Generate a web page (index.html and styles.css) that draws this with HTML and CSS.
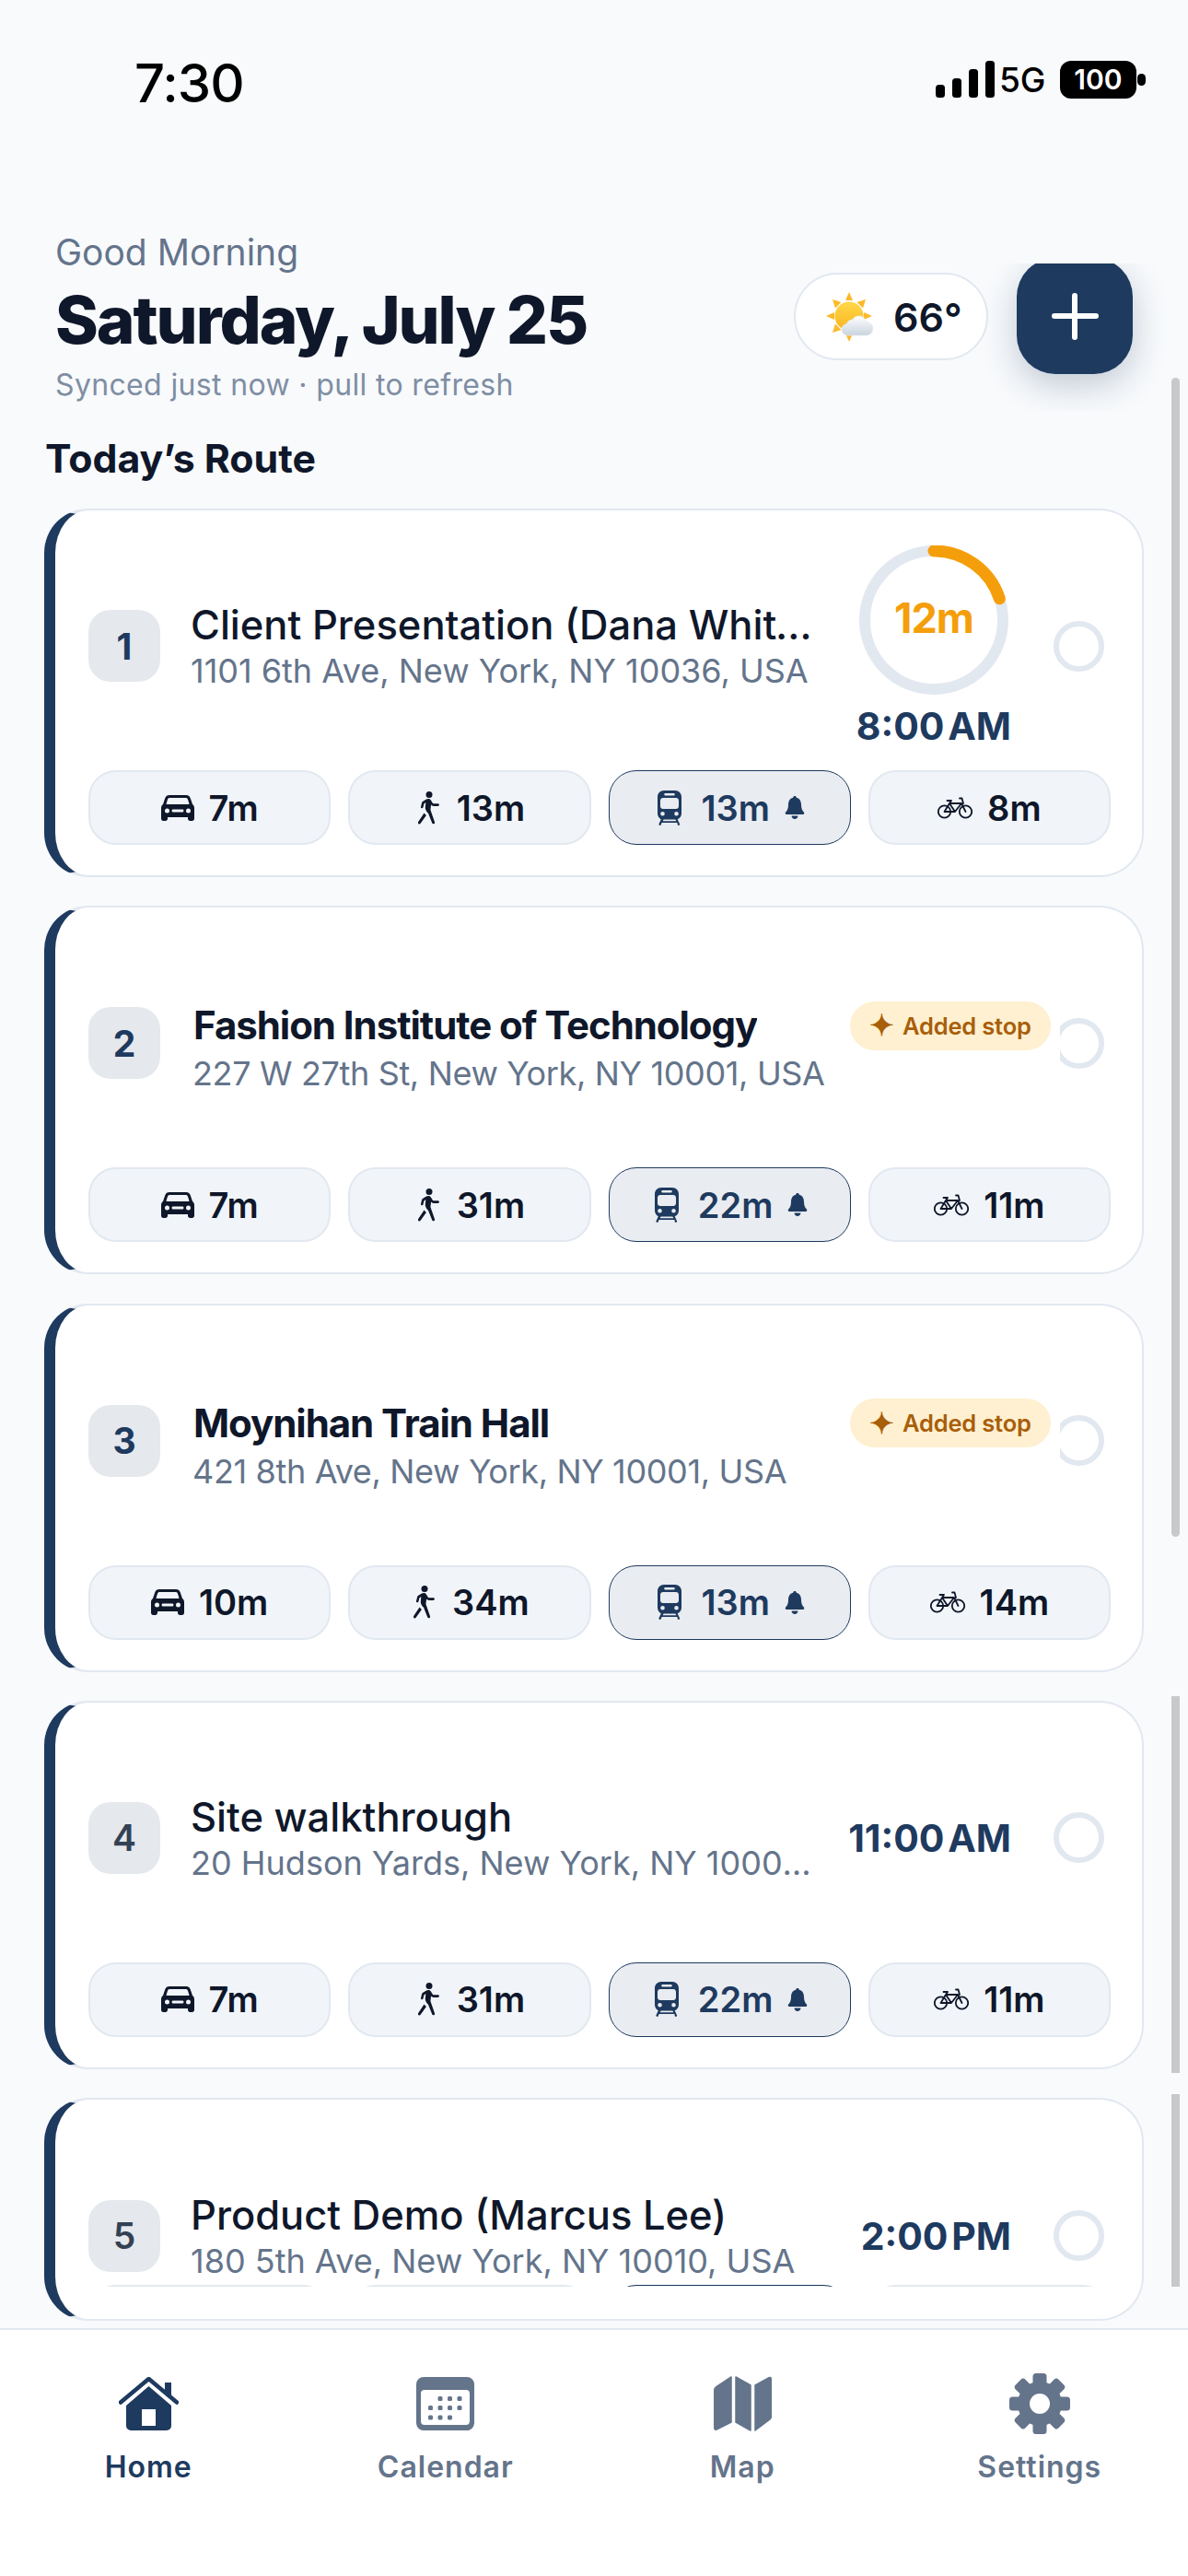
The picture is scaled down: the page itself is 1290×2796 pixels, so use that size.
FILE: index.html
```html
<!DOCTYPE html>
<html lang="en">
<head>
<meta charset="utf-8">
<title>Today's Route</title>
<link rel="stylesheet" href="styles.css">
</head>
<body>
<svg class="defs" width="0" height="0" aria-hidden="true">
  <symbol id="i-car" viewBox="0 0 36 28"><path fill-rule="evenodd" d="M9 0h18c2.400 0 4 1.200 4.800 3.400L34 10c1.300 1 2 2.400 2 4v11.500c0 1.400-1 2.500-2.400 2.500h-2.200c-1.400 0-2.400-1-2.400-2.500V24H7v1.500C7 27 6 28 4.600 28H2.400C1 28 0 26.900 0 25.500V14c0-1.600.7-3 2-4l2.200-6.600C5 1.200 6.600 0 9 0zm.4 3C8.200 3 7.400 3.600 7 4.800L5.600 9.200C5.400 9.700 5.700 10 6.200 10h23.600c.5 0 .8-.3.6-.8L29 4.800C28.600 3.600 27.800 3 26.600 3H9.400zM6.500 14.500a2.500 2.500 0 1 0 0 5 2.500 2.500 0 0 0 0-5zm23 0a2.500 2.500 0 1 0 0 5 2.500 2.500 0 0 0 0-5zM13 15.500c-.8 0-1.500.6-1.500 1.500s.7 1.500 1.500 1.500h10c.8 0 1.500-.6 1.500-1.500s-.7-1.500-1.500-1.500H13z"/></symbol>
  <symbol id="i-walk" viewBox="0 0 24 36"><circle cx="12" cy="3.500" r="3.500"/><path d="M9 8.500c1.500-.8 3.600-.8 4.700.7l2 3.200c.4.600.9.900 1.600.9h4.200c.8 0 1.400.6 1.400 1.300s-.6 1.300-1.400 1.300h-4.600c-1.200 0-2.100-.5-2.800-1.400l-.7 5.500 4.600 13.200c.3.900-.1 1.700-.9 2-.8.300-1.600-.1-1.900-.9l-4.200-10.500-1.500-1.600-1-1.800c-.6-1-.8-2-.7-3.100l.5-5.300-1.900 1.500-.9 3.800c-.2.800-.9 1.200-1.600 1-.7-.2-1.100-.9-.9-1.600l1.100-4.500c.1-.5.400-.9.800-1.200L9 8.500z"/><path d="M6.500 23.500l2.400 2.600-6.300 8.700c-.5.700-1.400.9-2.100.4-.7-.5-.8-1.400-.3-2.100l6.300-9.600z"/></symbol>
  <symbol id="i-train" viewBox="0 0 26 38"><path fill-rule="evenodd" d="M7 0h12c4 0 7 3 7 7v18c0 3-1.700 5.200-4.300 6.200l2.300 5c.3.700 0 1.300-.6 1.600-.6.300-1.300 0-1.600-.6L21.400 35H4.600l-.9 2.200c-.3.600-1 .9-1.600.6-.6-.3-.9-.9-.6-1.600l2.300-5C1.700 30.200 0 28 0 25V7c0-4 3-7 7-7zm1.500 3a1.300 1.300 0 0 0 0 2.600h9a1.300 1.300 0 0 0 0-2.600h-9zM6 8C4.300 8 3 9.200 3 11v6c0 1.700 1.300 3 3 3h14c1.700 0 3-1.300 3-3v-6c0-1.800-1.300-3-3-3H6zM5.500 23a2.300 2.300 0 1 0 0 4.600 2.300 2.300 0 0 0 0-4.600zm15 0a2.300 2.300 0 1 0 0 4.600 2.300 2.300 0 0 0 0-4.600zM6.600 31.500l-.9 1.700h14.600l-.9-1.700H6.600z"/></symbol>
  <symbol id="i-bell" viewBox="0 0 22 25"><path d="M11 0c1 0 1.700.7 1.800 1.700C16.400 2.600 18 5.700 18 9.500c0 3.600.8 6 2.900 8.100.9.900.3 2.400-1 2.400H2.100c-1.300 0-1.900-1.500-1-2.400C3.200 15.500 4 13.100 4 9.500c0-3.800 1.600-6.900 5.200-7.800C9.300.7 10 0 11 0zM7.500 21.500h7C14.300 23.500 12.800 25 11 25s-3.300-1.500-3.500-3.500z"/></symbol>
  <symbol id="i-bike" viewBox="0 0 38 24"><g fill="none" stroke="currentColor" stroke-width="1.800" stroke-linecap="round" stroke-linejoin="round"><circle cx="7.500" cy="16" r="6.700"/><circle cx="30.500" cy="16" r="6.700"/><path d="M7.500 16L13 7h13l4.500 9M13 7l6 9h-11.500M26 7l-7 9M24 1.500h2.500L28 7M10.500 4H15l-2 3"/></g></symbol>
</svg>

<div class="phone">
  <header class="status">
    <span class="clock">7:30</span>
    <div class="status-right">
      <span class="signal"><i class="bar bar-1"></i><i class="bar bar-2"></i><i class="bar bar-3"></i><i class="bar bar-4"></i></span>
      <span class="net">5G</span>
      <span class="battery">100</span>
      <i class="nub"></i>
    </div>
  </header>

  <section class="top">
    <div class="hello">
      <p class="greeting">Good Morning</p>
      <h1 class="date">Saturday, July 25</h1>
      <p class="synced">Synced just now · pull to refresh</p>
    </div>
    <div class="top-actions">
      <div class="weather">
        <svg class="weather-icon" viewBox="0 0 54 54" aria-hidden="true">
          <defs><linearGradient id="sun" x1="0" y1="0" x2="0" y2="1"><stop offset="0" stop-color="#ffd84a"/><stop offset="1" stop-color="#fbb41e"/></linearGradient>
          <linearGradient id="cloud" x1="0" y1="0" x2="0" y2="1"><stop offset="0" stop-color="#ffffff"/><stop offset="1" stop-color="#c9d3de"/></linearGradient></defs>
          <g fill="#fdb92c"><path d="M25 0l4 9h-8z"/><path d="M25 54l-4-9h8z"/><path d="M0 26l9-4v8z"/><path d="M50 26l-9 4v-8z"/><path d="M7 8l9.500 3-6.500 6.500z"/><path d="M43 8l-3 9.500-6.500-6.500z"/><path d="M7 44l3-9.500 6.500 6.500z"/></g>
          <circle cx="25" cy="26" r="15.500" fill="url(#sun)"/>
          <path fill="url(#cloud)" stroke="#e3e8ee" stroke-width=".8" d="M24 47c-4 0-7-2.600-7-6.300 0-3.200 2.300-5.700 5.400-6.200.9-3 3.500-4.600 6.300-4.500 1.300-2.500 4-4 6.800-4 4 0 7.200 2.700 7.900 6.300 4.300.2 7.400 3.200 7.400 7.400 0 4.200-3.400 7.300-7.800 7.300H24z"/>
        </svg>
        <span class="temp">66°</span>
      </div>
      <button class="fab" type="button" aria-label="Add stop"><i class="plus"></i></button>
    </div>
  </section>

  <h2 class="route-title">Today’s Route</h2>

  <main class="route">
    <article class="card">
      <div class="head">
        <span class="chip">1</span>
        <div class="text">
          <h3 class="title">Client Presentation (Dana Whitfield)</h3>
          <p class="addr">1101 6th Ave, New York, NY 10036, USA</p>
        </div>
        <div class="when when-ring">
          <svg class="ring" viewBox="0 0 162 162" aria-hidden="true">
            <circle class="ring-track" cx="81" cy="81" r="75"/>
            <path class="ring-arc" d="M81 6A75 75 0 0 1 152.300 57.800"/>
            <text class="ring-text" x="81" y="95" text-anchor="middle">12m</text>
          </svg>
          <span class="time">8:00 AM</span>
        </div>
        <span class="check"></span>
      </div>
      <div class="pills">
        <div class="pill"><svg class="ico"><use href="#i-car"/></svg><span>7m</span></div>
        <div class="pill"><svg class="ico ico-walk"><use href="#i-walk"/></svg><span>13m</span></div>
        <div class="pill pill-on"><svg class="ico ico-train"><use href="#i-train"/></svg><span>13m</span><svg class="bell"><use href="#i-bell"/></svg></div>
        <div class="pill"><svg class="ico ico-bike"><use href="#i-bike"/></svg><span>8m</span></div>
      </div>
    </article>

    <article class="card">
      <div class="head">
        <span class="chip">2</span>
        <div class="text text-added">
          <div class="title-row">
            <h3 class="title title-strong">Fashion Institute of Technology</h3>
            <span class="badge"><i class="spark">✦</i>Added stop</span>
          </div>
          <p class="addr addr-tight">227 W 27th St, New York, NY 10001, USA</p>
        </div>
        <span class="check check-cut"></span>
      </div>
      <div class="pills">
        <div class="pill"><svg class="ico"><use href="#i-car"/></svg><span>7m</span></div>
        <div class="pill"><svg class="ico ico-walk"><use href="#i-walk"/></svg><span>31m</span></div>
        <div class="pill pill-on"><svg class="ico ico-train"><use href="#i-train"/></svg><span>22m</span><svg class="bell"><use href="#i-bell"/></svg></div>
        <div class="pill"><svg class="ico ico-bike"><use href="#i-bike"/></svg><span>11m</span></div>
      </div>
    </article>

    <article class="card">
      <div class="head">
        <span class="chip">3</span>
        <div class="text text-added">
          <div class="title-row">
            <h3 class="title title-strong">Moynihan Train Hall</h3>
            <span class="badge"><i class="spark">✦</i>Added stop</span>
          </div>
          <p class="addr addr-tight">421 8th Ave, New York, NY 10001, USA</p>
        </div>
        <span class="check check-cut"></span>
      </div>
      <div class="pills">
        <div class="pill"><svg class="ico"><use href="#i-car"/></svg><span>10m</span></div>
        <div class="pill"><svg class="ico ico-walk"><use href="#i-walk"/></svg><span>34m</span></div>
        <div class="pill pill-on"><svg class="ico ico-train"><use href="#i-train"/></svg><span>13m</span><svg class="bell"><use href="#i-bell"/></svg></div>
        <div class="pill"><svg class="ico ico-bike"><use href="#i-bike"/></svg><span>14m</span></div>
      </div>
    </article>

    <article class="card">
      <div class="head">
        <span class="chip chip-muted">4</span>
        <div class="text">
          <h3 class="title">Site walkthrough</h3>
          <p class="addr">20 Hudson Yards, New York, NY 10001, USA</p>
        </div>
        <div class="when"><span class="time">11:00 AM</span></div>
        <span class="check"></span>
      </div>
      <div class="pills">
        <div class="pill"><svg class="ico"><use href="#i-car"/></svg><span>7m</span></div>
        <div class="pill"><svg class="ico ico-walk"><use href="#i-walk"/></svg><span>31m</span></div>
        <div class="pill pill-on"><svg class="ico ico-train"><use href="#i-train"/></svg><span>22m</span><svg class="bell"><use href="#i-bell"/></svg></div>
        <div class="pill"><svg class="ico ico-bike"><use href="#i-bike"/></svg><span>11m</span></div>
      </div>
    </article>

    <article class="card card-folding">
      <div class="head head-folding">
        <span class="chip chip-muted">5</span>
        <div class="text">
          <h3 class="title">Product Demo (Marcus Lee)</h3>
          <p class="addr">180 5th Ave, New York, NY 10010, USA</p>
        </div>
        <div class="when"><span class="time">2:00 PM</span></div>
        <span class="check"></span>
      </div>
      <div class="pills pills-folding">
        <div class="pill"></div>
        <div class="pill"></div>
        <div class="pill pill-on"></div>
        <div class="pill"></div>
      </div>
    </article>
  </main>

  <nav class="tabs">
    <a class="tab tab-on">
      <span class="tab-slot"><svg width="65" height="58" viewBox="0 0 65 58" aria-hidden="true"><path d="M32.500 10L57 31v22a5 5 0 0 1-5 5H13a5 5 0 0 1-5-5V31zM25 35v18h15V35z" fill-rule="evenodd" fill="currentColor"/><path d="M2 27.500L32.500 2 63 27.500" fill="none" stroke="currentColor" stroke-width="4.500" stroke-linecap="round" stroke-linejoin="round"/><path d="M50 6h7v17l-7-6z" fill="currentColor"/></svg></span>
      <span>Home</span>
    </a>
    <a class="tab">
      <span class="tab-slot"><svg width="63" height="58" viewBox="0 0 63 58" aria-hidden="true"><path fill-rule="evenodd" fill="currentColor" d="M8 0h47a8 8 0 0 1 8 8v42a8 8 0 0 1-8 8H8a8 8 0 0 1-8-8V8a8 8 0 0 1 8-8zm1 14a4 4 0 0 0-4 4v30a4 4 0 0 0 4 4h45a4 4 0 0 0 4-4V18a4 4 0 0 0-4-4z"/><g fill="currentColor"><rect x="23.500" y="21" width="5" height="5" rx="1.500"/><rect x="34" y="21" width="5" height="5" rx="1.500"/><rect x="44.500" y="21" width="5" height="5" rx="1.500"/><rect x="13" y="31" width="5" height="5" rx="1.500"/><rect x="23.500" y="31" width="5" height="5" rx="1.500"/><rect x="34" y="31" width="5" height="5" rx="1.500"/><rect x="44.500" y="31" width="5" height="5" rx="1.500"/><rect x="13" y="41.500" width="5" height="5" rx="1.500"/><rect x="23.500" y="41.500" width="5" height="5" rx="1.500"/><rect x="34" y="41.500" width="5" height="5" rx="1.500"/></g></svg></span>
      <span>Calendar</span>
    </a>
    <a class="tab">
      <span class="tab-slot"><svg width="63" height="60" viewBox="0 0 63 60" aria-hidden="true"><g fill="currentColor" stroke="currentColor" stroke-width="1.500" stroke-linejoin="round"><path d="M19 1v49L3 58c-1.300.5-2.200-.2-2.200-1.500V15c0-1.600.5-2.500 2-3.300z"/><path d="M24 1l16 9v49l-16-9z"/><path d="M45 10l15-8.300c1.300-.7 2.300 0 2.300 1.300v41c0 1.700-.5 2.600-2 3.400L45 59z"/></g></svg></span>
      <span>Map</span>
    </a>
    <a class="tab">
      <span class="tab-slot"><svg width="66" height="66" viewBox="-33 -33 66 66" aria-hidden="true"><g fill="currentColor"><circle r="24"/><rect x="-7.500" y="-33" width="15" height="16" rx="3.500"/><rect x="-7.500" y="-33" width="15" height="16" rx="3.500" transform="rotate(45)"/><rect x="-7.500" y="-33" width="15" height="16" rx="3.500" transform="rotate(90)"/><rect x="-7.500" y="-33" width="15" height="16" rx="3.500" transform="rotate(135)"/><rect x="-7.500" y="-33" width="15" height="16" rx="3.500" transform="rotate(180)"/><rect x="-7.500" y="-33" width="15" height="16" rx="3.500" transform="rotate(225)"/><rect x="-7.500" y="-33" width="15" height="16" rx="3.500" transform="rotate(270)"/><rect x="-7.500" y="-33" width="15" height="16" rx="3.500" transform="rotate(315)"/></g><circle r="11" fill="#fff"/></svg></span>
      <span>Settings</span>
    </a>
  </nav>

  <div class="scroll scroll-a"></div>
  <div class="scroll scroll-b"></div>
  <div class="scroll scroll-c"></div>
</div>
</body>
</html>
```
FILE: styles.css
```css
* { box-sizing: border-box; }
html, body { margin: 0; padding: 0; }
body { font-family: Inter, "Noto Sans", sans-serif; color: #0f172a; background: #f8fafc; }
.defs { position: absolute; }
.phone { position: relative; width: 1290px; height: 2796px; display: flex; flex-direction: column; overflow: hidden; background: #f8fafc; }

/* status bar */
.status { height: 250px; flex: none; padding: 62px 46px 0 146px; display: flex; justify-content: space-between; align-items: flex-start; color: #000; }
.clock { font-size: 58px; font-weight: 500; line-height: 56px; letter-spacing: -1px; }
.status-right { display: flex; align-items: flex-start; padding-top: 4px; margin-right: 0; }
.signal { display: flex; align-items: flex-end; gap: 7.500px; height: 40px; }
.bar { display: block; width: 10.500px; background: #000; border-radius: 3.500px; }
.bar-1 { height: 14px; }
.bar-2 { height: 21px; }
.bar-3 { height: 31px; }
.bar-4 { height: 40px; }
.net { font-size: 37px; font-weight: 500; line-height: 40px; margin-left: 5px; margin-top: 1px; letter-spacing: -.2px; width: 66px; }
.battery { width: 83px; height: 41px; background: #000; color: #fff; border-radius: 12px; font-size: 30px; font-weight: 600; line-height: 41px; text-align: center; }
.nub { width: 9px; height: 13px; background: #000; border-radius: 5px; margin: 14px 0 0 1px; }

/* header */
.top { flex: none; height: 196px; display: flex; justify-content: space-between; padding: 0 0 0 60px; }
.hello { display: flex; flex-direction: column; }
.greeting { margin: 0; font-size: 39px; line-height: 48px; color: #64748b; }
.date { margin: 7px 0 0; font-size: 71px; line-height: 84px; font-weight: 800; letter-spacing: -2.050px; color: #0f172a; }
.synced { margin: 9px 0 0; font-size: 32px; line-height: 40px; color: #7f8ea3; letter-spacing: .35px; }
.top-actions { align-self: flex-end; height: 160px; display: flex; align-items: flex-start; gap: 31px; padding: 10px 60px 0 40px; overflow: hidden; }
.weather { width: 211px; height: 95px; background: #fff; border: 2px solid #e2e8f0; border-radius: 48px; display: flex; align-items: center; padding-left: 33px; gap: 19px; }
.weather-icon { width: 54px; height: 54px; flex: none; }
.temp { font-size: 43px; font-weight: 600; color: #0f172a; }
.fab { width: 126px; height: 126px; margin-top: -16px; border: 0; padding: 0; background: #1e3a5f; border-radius: 42px; box-shadow: 0 12px 36px rgba(30, 58, 95, .25); display: flex; align-items: center; justify-content: center; }
.plus { position: relative; display: block; width: 51px; height: 51px; }
.plus::before, .plus::after { content: ""; position: absolute; background: #fff; border-radius: 3px; }
.plus::before { left: 0; right: 0; top: 22.500px; height: 6px; }
.plus::after { top: 0; bottom: 0; left: 22.500px; width: 6px; }

.route-title { flex: none; margin: 28px 0 0 49px; font-size: 42.800px; line-height: 48px; font-weight: 700; color: #0f172a; height: 60px; }

/* route list */
.route { flex: 1; min-height: 0; padding: 18px 48px 0; display: flex; flex-direction: column; gap: 31.250px; overflow: hidden; }
.card { flex: none; height: 400px; background: #fff; border: 2px solid #e2e8f0; border-left: 12px solid #1e3a5f; border-radius: 48px; padding: 12px 34px 34px 36px; display: flex; flex-direction: column; }
.card-folding { height: 242px; padding-bottom: 0; }
.head { height: 270px; flex: none; display: flex; align-items: center; }
.head-folding { height: 189px; padding-top: 82px; }
.chip { flex: none; width: 78px; height: 78px; border-radius: 24px; background: #e5e8ec; color: #1e3a5f; font-size: 39px; font-weight: 700; display: flex; align-items: center; justify-content: center; }
.chip-muted { color: #334155; font-weight: 600; }
.text { flex: 1; min-width: 0; margin: 1px 0 0 33px; }
.text-added { padding-top: 10px; }
.title { margin: 0; font-size: 43.500px; line-height: 54px; font-weight: 500; color: #0f172a; white-space: nowrap; overflow: hidden; text-overflow: ellipsis; }
.title-strong { font-weight: 650; letter-spacing: -1.050px; font-size: 42px; margin-left: 3px; }
.addr { margin: -1px 0 0; font-size: 36px; line-height: 48px; color: #64748b; white-space: nowrap; overflow: hidden; text-overflow: ellipsis; }
.addr-tight { margin: 1px 0 0 2px; letter-spacing: -.35px; }
.title-row { display: flex; align-items: center; justify-content: space-between; margin-right: 3px; }
.badge { flex: none; width: 218px; height: 53px; border-radius: 27px; background: #fef0d0; color: #a85e0a; font-size: 25.500px; font-weight: 600; display: flex; align-items: center; justify-content: center; letter-spacing: -.2px; }
.spark { font-style: normal; font-size: 32px; line-height: 30px; margin-right: 9px; }
.when { flex: none; margin: 0 46px 0 30px; display: flex; flex-direction: column; align-items: center; }
.when-ring { margin-left: 42px; }
.ring { display: block; width: 162px; height: 162px; margin-bottom: 12px; }
.ring-track { fill: none; stroke: #e2e8f0; stroke-width: 12; }
.ring-arc { fill: none; stroke: #f59e0b; stroke-width: 13; stroke-linecap: round; }
.ring-text { font-family: Inter, sans-serif; font-size: 45px; font-weight: 700; fill: #f59e0b; letter-spacing: -1px; }
.time { font-size: 41px; line-height: 44px; font-weight: 700; color: #1e3a5f; word-spacing: -6px; white-space: nowrap; }
.check { flex: none; width: 55px; height: 55px; margin-right: 7px; border: 6px solid #e2e8f0; border-radius: 50%; }
.check-cut { clip-path: inset(-1px -1px -1px 7px); }

/* travel modes */
.pills { flex: none; display: grid; grid-template-columns: repeat(4, 1fr); gap: 19px; }
.pills-folding { height: 2px; overflow: hidden; }
.pill { height: 81px; border: 2px solid #e2e8f0; border-radius: 30px; background: #f1f5f9; display: flex; align-items: center; justify-content: center; gap: 16px; font-size: 38px; font-weight: 600; color: #0f172a; }
.pill-on { border: 1.500px solid #1e3a5f; background: #e9ecf0; color: #1e3a5f; padding-left: 4px; }
.ico { width: 36px; height: 28px; fill: currentColor; flex: none; }
.ico-walk { width: 24px; height: 36px; margin: 0 2px 0 4px; }
.ico-train { width: 26px; height: 38px; margin-right: 5px; }
.ico-bike { width: 38px; height: 24px; color: #0f172a; }
.bell { width: 22px; height: 25px; fill: currentColor; flex: none; }

/* tab bar */
.tabs { flex: none; height: 269px; background: #fff; border-top: 2px solid #e2e8f0; display: grid; grid-template-columns: repeat(4, 1fr); padding-top: 47px; }
.tab { display: flex; flex-direction: column; align-items: center; height: 130px; color: #64748b; font-size: 32px; font-weight: 600; letter-spacing: 1px; line-height: 40px; }
.tab-on { color: #1e3a5f; }
.tab-slot { height: 66px; margin-bottom: 16px; display: flex; align-items: center; justify-content: center; flex: none; }

/* scroll indicator */
.scroll { position: absolute; left: 1272px; width: 9px; background: #c8c9cb; }
.scroll-a { top: 410px; height: 1258px; border-radius: 4.500px; }
.scroll-b { top: 1841px; height: 409px; }
.scroll-c { top: 2273px; height: 209px; }
```
